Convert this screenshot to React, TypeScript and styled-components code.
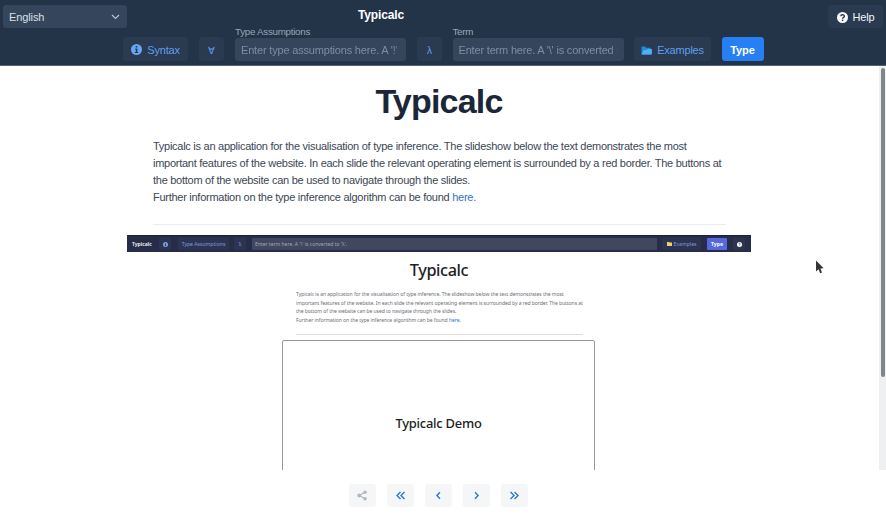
import React from "react";
import styled, { createGlobalStyle, css } from "styled-components";

const GlobalStyle = createGlobalStyle`
  * { box-sizing: border-box; }
  body {
    margin: 0;
    background: #fff;
    overflow: hidden;
    font-family: "Liberation Sans", Arial, sans-serif;
    font-size: 11px;
  }
  button, input { font-family: inherit; border: 0; margin: 0; padding: 0; }
`;

const Page = styled.div`
  width: 886px;
  height: 520px;
  display: flex;
  flex-direction: column;
  background: #fff;
`;

const Header = styled.header`
  height: 66px;
  flex: none;
  background: #233348;
  border-bottom: 1px solid #52616f;
`;

const TopRow = styled.div`
  height: 28px;
  padding: 5px 3px 0;
  display: grid;
  grid-template-columns: 124px 1fr 55px;
  align-items: start;
`;

const Select = styled.button`
  height: 23px;
  padding: 1px 7px 0 6px;
  border-radius: 3px;
  background: #35455c;
  color: #d9e0e8;
  font-size: 11px;
  letter-spacing: -0.1px;
  display: flex;
  align-items: center;
  justify-content: space-between;
`;

const Brand = styled.div`
  padding-left: 231px;
  font-size: 12px;
  letter-spacing: -0.15px;
  font-weight: bold;
  line-height: 20px;
  color: #fff;
`;

const ToolRow = styled.div`
  height: 33px;
  padding-left: 123px;
  display: flex;
  align-items: flex-end;
`;

const ToolButton = styled.button<{ $w: number; $gap?: number; $tone?: "primary" | "light" }>`
  width: ${(p) => p.$w}px;
  height: ${(p) => (p.$tone === "light" ? 23 : 24)}px;
  margin-right: ${(p) => p.$gap ?? 11}px;
  border-radius: 3px;
  background: #293a51;
  color: #5f9ff0;
  font-size: 11px;
  letter-spacing: -0.2px;
  display: flex;
  align-items: center;
  justify-content: center;
  gap: 5px;
  padding-top: 1px;
  ${(p) => p.$tone === "primary" && css`
    background: #2680f3;
    color: #fff;
    font-weight: bold;
    letter-spacing: -0.1px;
  `}
  ${(p) => p.$tone === "light" && css`
    color: #f1f5f9;
  `}
`;

const Symbol = styled.span`
  padding-top: 2px;
  font-size: 10px;
  line-height: 12px;
`;

const Field = styled.label<{ $gap: number }>`
  width: 171px;
  margin-right: ${(p) => p.$gap}px;
  display: flex;
  flex-direction: column;
  color: #98a6b7;
  font-size: 9.8px;
  letter-spacing: -0.28px;
  line-height: 10px;
`;

const FieldInput = styled.div`
  height: 23px;
  margin-top: 1px;
  padding: 0 6px;
  border-radius: 3px;
  background: #35455c;
  color: #7e8da1;
  font-size: 11px;
  line-height: 25px;
`;

const Clip = styled.div<{ $spacing: number }>`
  overflow: hidden;
  white-space: nowrap;
  letter-spacing: ${(p) => p.$spacing}px;
  mask-image: linear-gradient(to right, #000 calc(100% - 6px), transparent);
`;

const Main = styled.main`
  height: 404px;
  flex: none;
  display: grid;
  grid-template-columns: 1fr 7px;
  overflow: hidden;
`;

const Content = styled.div`
  height: 404px;
  overflow: hidden;
`;

const Title = styled.h1`
  margin: 17px 0 0;
  padding-right: 1px;
  text-align: center;
  font-size: 34px;
  line-height: 37px;
  letter-spacing: -0.8px;
  color: #1b2738;
`;

const Intro = styled.div`
  width: 573px;
  height: 87px;
  margin: 18px 0 0 153px;
  border-bottom: 1px solid #e9edf2;
  color: #3b4655;
  font-size: 11px;
  line-height: 17px;
  white-space: nowrap;
`;

const Line = styled.div<{ $spacing?: number }>`
  letter-spacing: ${(p) => p.$spacing ?? 0}px;
`;

const Link = styled.a`
  color: #2f74d0;
`;

const Slide = styled.section`
  width: 624px;
  margin: 10px 0 0 127px;
  font-family: "Noto Sans", sans-serif;
  color: #222;
`;

const SlideBar = styled.div`
  height: 17px;
  padding: 2px 5px;
  display: flex;
  align-items: center;
  background: #272d48;
  border-top: 1px solid #1c2138;
  color: #fff;
  font-size: 5.1px;
  line-height: 11px;
  white-space: nowrap;
`;

const SlideBrand = styled.b`
  width: 27px;
  font-weight: 600;
`;

const SlideChip = styled.span<{ $w: number; $gap: number; $primary?: boolean }>`
  width: ${(p) => p.$w}px;
  height: 12px;
  flex: none;
  margin-right: ${(p) => p.$gap}px;
  border-radius: 1px;
  display: flex;
  align-items: center;
  justify-content: center;
  gap: 2px;
  background: ${(p) => (p.$primary ? "#5668dc" : "#2d3450")};
  color: ${(p) => (p.$primary ? "#fff" : "#8297e4")};
  font-weight: ${(p) => (p.$primary ? 700 : 400)};
`;

const SlideInput = styled.span`
  width: 405px;
  height: 12px;
  flex: none;
  margin-right: 5px;
  padding-left: 3px;
  border-radius: 1px;
  background: #40475f;
  color: #a2a8ba;
  font-size: 5px;
  line-height: 12px;
`;

const SlideTitle = styled.h2`
  margin: 6px 0 0;
  text-align: center;
  font-size: 16.3px;
  letter-spacing: -0.4px;
  line-height: 24px;
  font-weight: 500;
  color: #202124;
`;

const SlideText = styled.div`
  width: 287px;
  height: 45px;
  margin: 8px 0 0 169px;
  border-bottom: 1px solid #dcdcda;
  color: #6d7075;
  font-size: 5.1px;
  line-height: 8.5px;
  white-space: nowrap;
`;

const DemoFrame = styled.div`
  width: 313px;
  height: 200px;
  margin: 5px 0 0 155px;
  padding-top: 72px;
  border: 1px solid #96989a;
  border-radius: 2px;
  text-align: center;
  font-size: 12.9px;
  letter-spacing: -0.22px;
  line-height: 20px;
  font-weight: 500;
  color: #222;
`;

const ScrollTrack = styled.div`
  padding: 2px 1px 0 2px;
  background: #eff0f2;
`;

const ScrollThumb = styled.div`
  height: 309px;
  border-radius: 2px;
  background: #80878a;
`;

const Footer = styled.footer`
  flex: 1;
  padding-top: 14px;
  display: flex;
  justify-content: center;
  gap: 11px;
  padding-right: 10px;
`;

const NavButton = styled.button<{ $muted?: boolean }>`
  width: 27px;
  height: 23px;
  border-radius: 3px;
  background: #f4f6f8;
  color: ${(p) => (p.$muted ? "#b4b8be" : "#2d76cd")};
  display: flex;
  align-items: center;
  justify-content: center;
`;

const Pointer = styled.svg`
  position: absolute;
  left: 815px;
  top: 260px;
`;

const InfoIcon = ({ size = 11, bg = "#69a5f4", fg = "#26374e" }) => (
  <svg width={size} height={size} viewBox="0 0 16 16">
    <circle cx="8" cy="8" r="8" fill={bg} />
    <path d="M6.8 3h2.500v2.200H6.800zM6 6.500h3.300v5H10.500V13H5.500v-1.500h1.500V8H6z" fill={fg} />
  </svg>
);

const HelpIcon = ({ size = 11 }) => (
  <svg width={size} height={size} viewBox="0 0 16 16">
    <circle cx="8" cy="8" r="8" fill="#fff" />
    <path d="M5.500 6.200C5.500 3.200 10.700 3.200 10.700 6c0 1.900-2.600 1.700-2.600 3.700" fill="none" stroke="#26364c" strokeWidth="2" />
    <path d="M7 11h2.200v2.100H7z" fill="#26364c" />
  </svg>
);

const FolderIcon = () => (
  <svg width="11" height="10" viewBox="0 0 11 10">
    <path d="M.5 9.500V1.500h3.700l1 1.200h4.300v6.800z" fill="#2188dc" />
    <path d="M.5 9.500 2.600 5h3.300l1-1h4v5.500z" fill="#4ab3f7" />
  </svg>
);

const Chevrons = ({ right, double }: { right?: boolean; double?: boolean }) => (
  <svg width="11" height="11" viewBox="0 0 11 11" fill="none" stroke="currentColor" strokeWidth="1.400">
    <g transform={right ? "translate(11 0) scale(-1 1)" : undefined}>
      {double ? <path d="M5.500 2 2 5.500l3.500 3.500M9.500 2 6 5.500l3.500 3.500" /> : <path d="M7 2.300 3.900 5.500 7 8.700" />}
    </g>
  </svg>
);

export default function App() {
  return (
    <Page>
      <GlobalStyle />
      <Header>
        <TopRow>
          <Select>
            English
            <svg width="9" height="6" viewBox="0 0 9 6" fill="none" stroke="#b6c3d2" strokeWidth="1.200">
              <path d="m1 1 3.500 3.500L8 1" />
            </svg>
          </Select>
          <Brand>Typicalc</Brand>
          <ToolButton $w={55} $gap={0} $tone="light"><HelpIcon /> Help</ToolButton>
        </TopRow>
        <ToolRow>
          <ToolButton $w={65}><InfoIcon /> Syntax</ToolButton>
          <ToolButton $w={25}><Symbol>∀</Symbol></ToolButton>
          <Field $gap={11}>
            Type Assumptions
            <FieldInput><Clip $spacing={-0.18}>Enter type assumptions here. A '!'</Clip></FieldInput>
          </Field>
          <ToolButton $w={25} $gap={10.5}><Symbol>λ</Symbol></ToolButton>
          <Field $gap={10.5}>
            Term
            <FieldInput><Clip $spacing={-0.18}>Enter term here. A '\' is converted t</Clip></FieldInput>
          </Field>
          <ToolButton $w={77} $gap={10.5}><FolderIcon />Examples</ToolButton>
          <ToolButton $w={42} $gap={0} $tone="primary">Type</ToolButton>
        </ToolRow>
      </Header>
      <Main>
        <Content>
          <Title>Typicalc</Title>
          <Intro>
            <Line $spacing={-0.27}>Typicalc is an application for the visualisation of type inference. The slideshow below the text demonstrates the most</Line>
            <Line $spacing={-0.27}>important features of the website. In each slide the relevant operating element is surrounded by a red border. The buttons at</Line>
            <Line $spacing={-0.27}>the bottom of the website can be used to navigate through the slides.</Line>
            <Line $spacing={-0.27}>Further information on the type inference algorithm can be found <Link>here.</Link></Line>
          </Intro>
          <Slide>
            <SlideBar>
              <SlideBrand>Typicalc</SlideBrand>
              <SlideChip $w={12} $gap={7}><InfoIcon size={5} bg="#829cec" /></SlideChip>
              <SlideChip $w={51} $gap={5}>Type Assumptions</SlideChip>
              <SlideChip $w={12} $gap={6}>λ</SlideChip>
              <SlideInput>Enter term here. A '\' is converted to 'λ'.</SlideInput>
              <SlideChip $w={39} $gap={6}>
                <svg width="5" height="4" viewBox="0 0 5 4"><path d="M0 0h2l.5.600H5V4H0z" fill="#f1d06b" /></svg>
                Examples
              </SlideChip>
              <SlideChip $w={20} $gap={6} $primary>Type</SlideChip>
              <SlideChip $w={12} $gap={0}><HelpIcon size={5} /></SlideChip>
            </SlideBar>
            <SlideTitle>Typicalc</SlideTitle>
            <SlideText>
              <Line $spacing={-0.09}>Typicalc is an application for the visualisation of type inference. The slideshow below the text demonstrates the most</Line>
              <Line $spacing={-0.09}>important features of the website. In each slide the relevant operating element is surrounded by a red border. The buttons at</Line>
              <Line $spacing={-0.09}>the bottom of the website can be used to navigate through the slides.</Line>
              <Line $spacing={-0.09}>Further information on the type inference algorithm can be found <Link>here</Link>.</Line>
            </SlideText>
            <DemoFrame>Typicalc Demo</DemoFrame>
          </Slide>
        </Content>
        <ScrollTrack><ScrollThumb /></ScrollTrack>
      </Main>
      <Footer>
        <NavButton $muted>
          <svg width="10" height="11" viewBox="0 0 10 11" fill="currentColor">
            <path d="M8 2.200 2.200 5.500 8 8.800" fill="none" stroke="currentColor" strokeWidth="1.200" />
            <circle cx="8" cy="2.200" r="1.800" /><circle cx="2.200" cy="5.500" r="1.900" /><circle cx="8" cy="8.800" r="1.800" />
          </svg>
        </NavButton>
        <NavButton><Chevrons double /></NavButton>
        <NavButton><Chevrons /></NavButton>
        <NavButton><Chevrons right /></NavButton>
        <NavButton><Chevrons right double /></NavButton>
      </Footer>
      <Pointer width="9" height="14" viewBox="0 0 9 14">
        <path d="M1 .5v11l2.500-2.200 1.700 3.900 1.900-.8-1.700-3.700L8.500 8z" fill="#343638" />
      </Pointer>
    </Page>
  );
}
